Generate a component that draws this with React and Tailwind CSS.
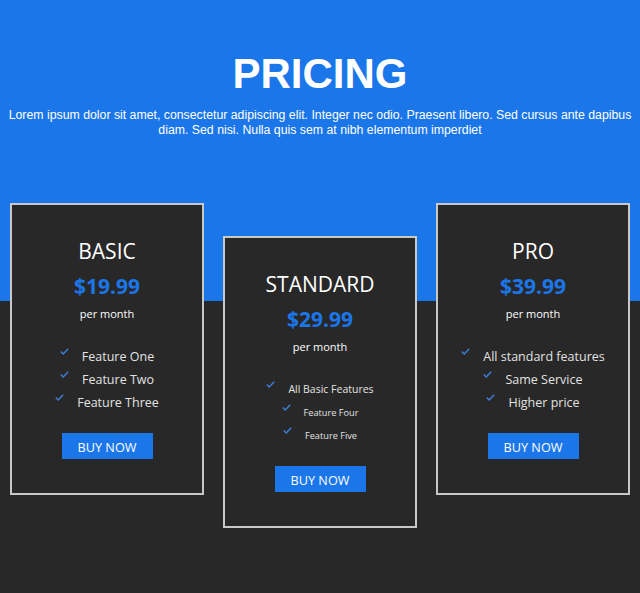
const plans = [
  {
    name: 'BASIC',
    price: '$19.99',
    features: [
      { text: 'Feature One', size: 'text-[12.5px]' },
      { text: 'Feature Two', size: 'text-[12.5px]' },
      { text: 'Feature Three', size: 'text-[12.5px]' },
    ],
  },
  {
    name: 'STANDARD',
    price: '$29.99',
    offset: true,
    features: [
      { text: 'All Basic Features', size: 'text-[10.5px]' },
      { text: 'Feature Four', size: 'text-[9.2px]' },
      { text: 'Feature Five', size: 'text-[9.2px]' },
    ],
  },
  {
    name: 'PRO',
    price: '$39.99',
    features: [
      { text: 'All standard features', size: 'text-[12.5px]' },
      { text: 'Same Service', size: 'text-[12.5px]' },
      { text: 'Higher price', size: 'text-[12.5px]' },
    ],
  },
]

const Check = () => (
  <svg width="9" height="7" viewBox="0 0 9 7" className="mt-[3px] shrink-0">
    <path d="M0.8 3.6 L3.2 5.9 L8.2 0.8" fill="none" stroke="#3f7fdc" strokeWidth="1.4" />
  </svg>
)

const Card = ({ plan }) => (
  <div
    className={`w-[194px] h-[292px] border-2 border-[#c8c8c8] bg-[#282828] flex flex-col items-center pt-[32px] font-['Open_Sans',sans-serif] ${
      plan.offset ? 'mt-[33px]' : ''
    }`}
  >
    <h2 className="text-[21px] leading-[28px] text-white">{plan.name}</h2>
    <div className="mt-[7px] text-[21px] leading-[28px] font-bold text-[#1b76ea]">{plan.price}</div>
    <div className="mt-[6px] text-[11px] leading-[16px] text-white">per month</div>
    <ul className="mt-[23px] flex flex-col items-center">
      {plan.features.map(f => (
        <li key={f.text} className="h-[23px] flex items-start gap-[13px]">
          <Check />
          <span className={`${f.size} leading-[23px] text-[#e2e2e2]`}>{f.text}</span>
        </li>
      ))}
    </ul>
    <button className="mt-[19px] w-[91px] h-[26px] pt-[3px] bg-[#1b76ea] text-white text-[12.7px] flex items-center justify-center">
      BUY NOW
    </button>
  </div>
)

const App = () => {
  return (
    <div className="min-h-screen bg-[linear-gradient(to_bottom,#1b76ea_301px,#282828_301px)]">
      <header className="pt-[50px] text-center text-white font-['Liberation_Sans',Arial,sans-serif]">
        <h1 className="text-[42px] leading-[48px] font-bold">PRICING</h1>
        <p className="mt-[10px] px-1 text-[12.3px] leading-[15px]">
          Lorem ipsum dolor sit amet, consectetur adipiscing elit. Integer nec odio. Praesent libero. Sed cursus ante dapibus diam. Sed nisi. Nulla quis sem at nibh elementum imperdiet
        </p>
      </header>
      <section className="mt-[65px] px-[10px] flex justify-between items-start">
        {plans.map(p => (
          <Card key={p.name} plan={p} />
        ))}
      </section>
    </div>
  )
}

export default App
